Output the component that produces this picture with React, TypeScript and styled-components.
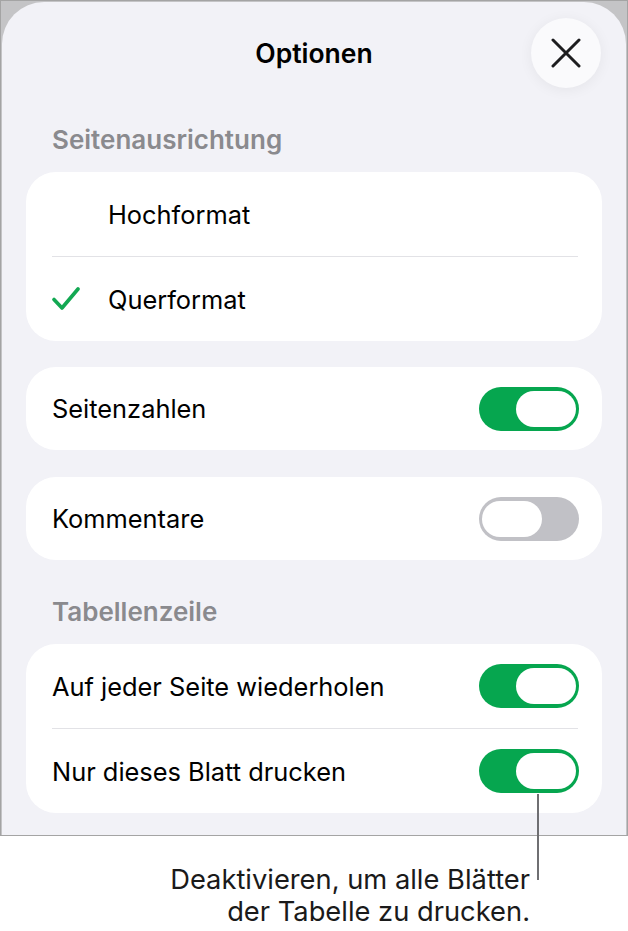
import React from "react";
import styled, { createGlobalStyle } from "styled-components";

const GlobalStyle = createGlobalStyle`
  html, body {
    margin: 0;
    padding: 0;
    background: #ffffff;
  }
  body {
    font-family: Inter, Roboto, "Liberation Sans", Arial, sans-serif;
    color: #000000;
    -webkit-font-smoothing: antialiased;
  }
`;

const Page = styled.div`
  position: relative;
  width: 628px;
  height: 931px;
`;

const Frame = styled.div`
  box-sizing: border-box;
  width: 628px;
  height: 836px;
  border: 1px solid #a4a4a4;
  padding: 1px 1px 0 1px;
  background: #c4c4c6;
  display: flex;
`;

const Sheet = styled.div`
  flex: 1;
  background: #f2f2f7;
  border-radius: 42px 42px 0 0;
  padding: 16px 24px 0 24px;
  display: flex;
  flex-direction: column;
`;

const Header = styled.header`
  display: grid;
  grid-template-columns: 1fr auto 1fr;
  align-items: center;
  height: 70px;
`;

const Title = styled.h1`
  grid-column: 2;
  margin: 0;
  font-size: 26.5px;
  font-weight: 600;
  color: #000000;
`;

const CloseButton = styled.button`
  grid-column: 3;
  justify-self: end;
  margin-right: 1px;
  width: 70px;
  height: 70px;
  border: none;
  border-radius: 50%;
  background: #fafafc;
  box-shadow: 0 2px 14px rgba(0, 0, 0, 0.06);
  display: flex;
  align-items: center;
  justify-content: center;
  padding: 0;
`;

const SectionTitle = styled.h2<{ $top: number }>`
  margin: ${(p) => p.$top}px 0 17px 0;
  padding-left: 26px;
  height: 30px;
  line-height: 30px;
  font-size: 26px;
  font-weight: 600;
  color: #8a8a8e;
`;

const Card = styled.section<{ $gap?: number }>`
  background: #ffffff;
  border-radius: 30px;
  margin-bottom: ${(p) => p.$gap ?? 0}px;
  display: flex;
  flex-direction: column;
`;

const Row = styled.div<{ $h?: number }>`
  height: ${(p) => p.$h ?? 84}px;
  padding: 0 23px 0 26px;
  display: flex;
  align-items: center;
  justify-content: space-between;
`;

const Label = styled.span`
  font-size: 25.4px;
  color: #000000;
`;

const CheckSlot = styled.span`
  width: 56px;
  display: flex;
  align-items: center;
`;

const OptionLabel = styled.span`
  flex: 1;
  display: flex;
  align-items: center;
  font-size: 25.4px;
`;

const Separator = styled.hr`
  margin: 0 24px 0 26px;
  border: none;
  height: 1px;
  background: #e2e2e6;
`;

const Track = styled.span<{ $on: boolean }>`
  box-sizing: border-box;
  width: 100px;
  height: 44px;
  border-radius: 22px;
  padding: 4px 3px;
  background: ${(p) => (p.$on ? "#06a64f" : "#c1c1c6")};
  display: flex;
  justify-content: ${(p) => (p.$on ? "flex-end" : "flex-start")};
`;

const Knob = styled.span`
  width: 60px;
  height: 36px;
  border-radius: 18px;
  background: #ffffff;
`;

const Callout = styled.p`
  margin: 28px 0 0 0;
  width: 530px;
  text-align: right;
  font-size: 27.3px;
  line-height: 32px;
  color: #1a1a1a;
`;

const Leader = styled.span`
  position: absolute;
  left: 537px;
  top: 794px;
  width: 2px;
  height: 86px;
  background: #6f6f72;
`;

const Toggle = ({ on }: { on: boolean }) => (
  <Track $on={on}>
    <Knob />
  </Track>
);

const CloseIcon = () => (
  <svg width="30" height="30" viewBox="0 0 30 30" fill="none">
    <path
      d="M2 2 L28 28 M28 2 L2 28"
      stroke="#1d1d1f"
      strokeWidth="3"
      strokeLinecap="round"
    />
  </svg>
);

const CheckIcon = () => (
  <svg width="28" height="24" viewBox="0 0 28 24" fill="none">
    <path
      d="M2 12.5 L10 21 L26 2"
      stroke="#12a852"
      strokeWidth="3.6"
      strokeLinecap="round"
      strokeLinejoin="round"
    />
  </svg>
);

const App = () => {
  return (
    <Page>
      <GlobalStyle />
      <Frame>
        <Sheet>
          <Header>
            <Title>Optionen</Title>
            <CloseButton aria-label="Schließen">
              <CloseIcon />
            </CloseButton>
          </Header>

          <SectionTitle $top={37}>Seitenausrichtung</SectionTitle>
          <Card $gap={26}>
            <Row>
              <OptionLabel>
                <CheckSlot />
                Hochformat
              </OptionLabel>
            </Row>
            <Separator />
            <Row>
              <OptionLabel>
                <CheckSlot>
                  <CheckIcon />
                </CheckSlot>
                Querformat
              </OptionLabel>
            </Row>
          </Card>

          <Card $gap={27}>
            <Row $h={83}>
              <Label>Seitenzahlen</Label>
              <Toggle on />
            </Row>
          </Card>

          <Card>
            <Row $h={83}>
              <Label>Kommentare</Label>
              <Toggle on={false} />
            </Row>
          </Card>

          <SectionTitle $top={37}>Tabellenzeile</SectionTitle>
          <Card>
            <Row>
              <Label>Auf jeder Seite wiederholen</Label>
              <Toggle on />
            </Row>
            <Separator />
            <Row>
              <Label>Nur dieses Blatt drucken</Label>
              <Toggle on />
            </Row>
          </Card>
        </Sheet>
      </Frame>
      <Callout>
        Deaktivieren, um alle Blätter
        <br />
        der Tabelle zu drucken.
      </Callout>
      <Leader />
    </Page>
  );
};

export default App;
